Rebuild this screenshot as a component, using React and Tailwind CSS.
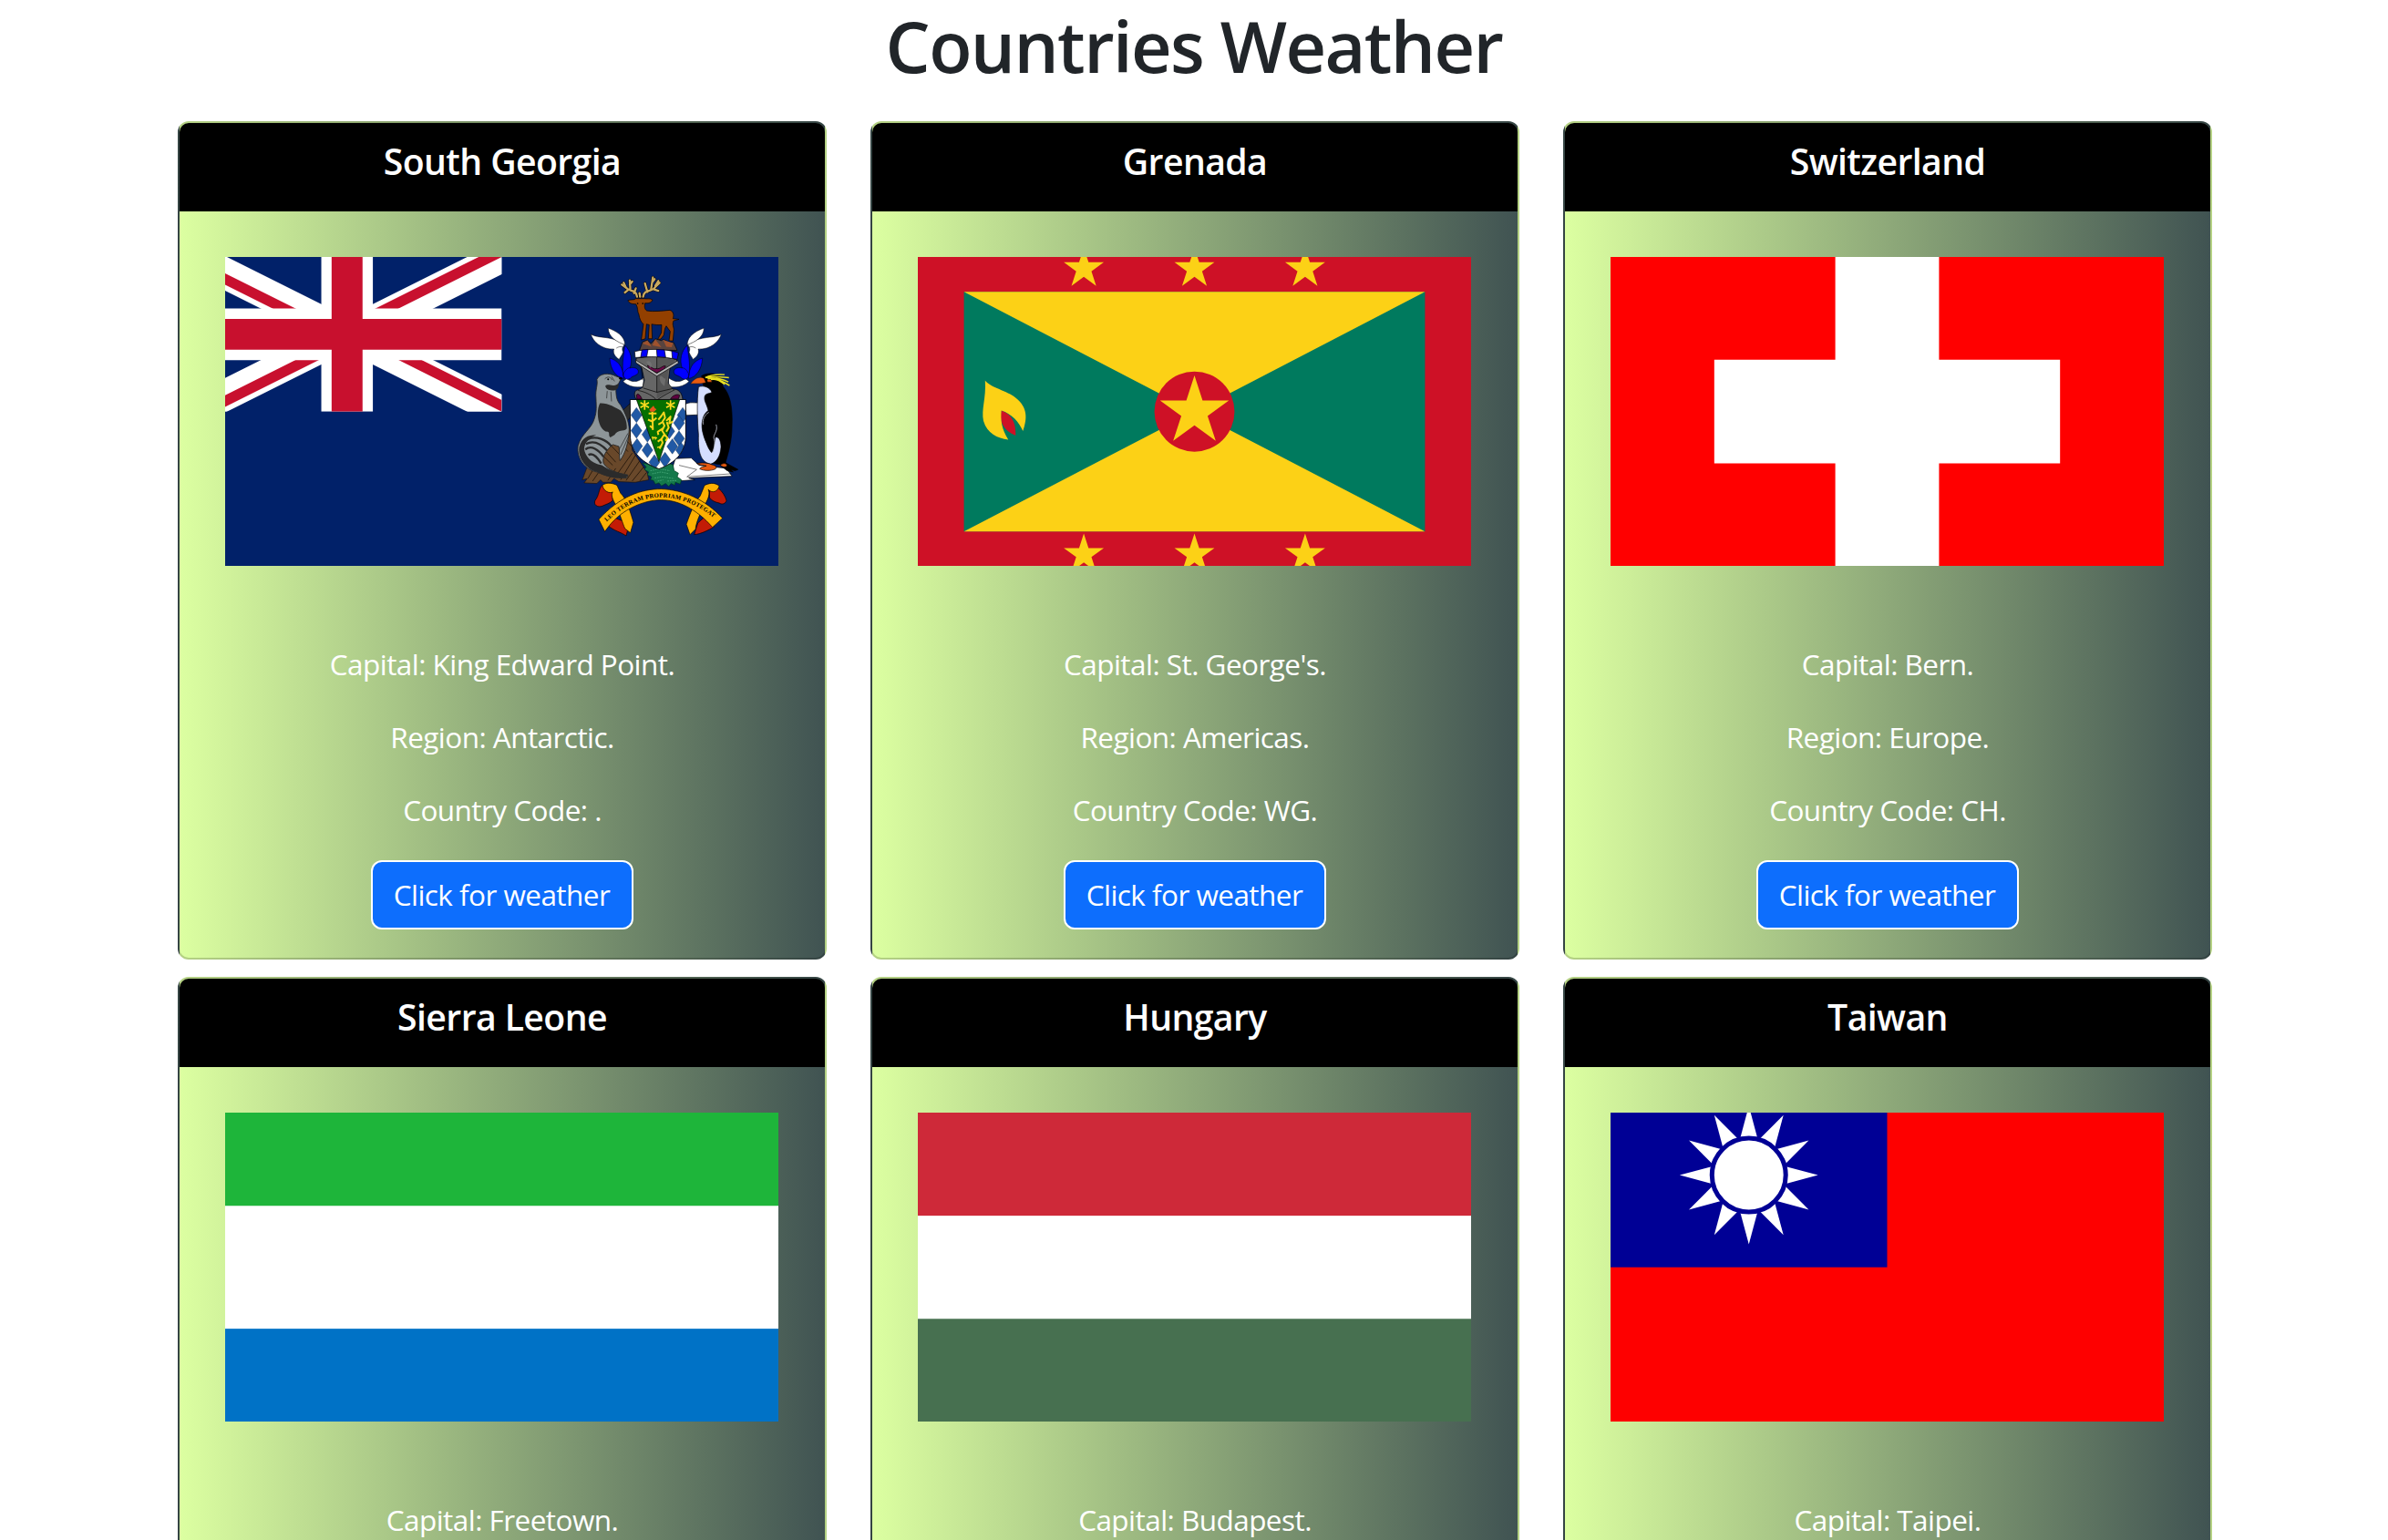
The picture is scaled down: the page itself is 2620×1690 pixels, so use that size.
const STAR =
  "0,-1 0.2245,-0.309 0.951,-0.309 0.3633,0.118 0.5878,0.809 0,0.382 -0.5878,0.809 -0.3633,0.118 -0.951,-0.309 -0.2245,-0.309";

function Flag({ viewBox, children }) {
  return (
    <svg
      className="block h-[339.4px] w-full"
      viewBox={viewBox}
      preserveAspectRatio="xMidYMid slice"
    >
      {children}
    </svg>
  );
}

function Feathers() {
  return (
    <g stroke="#000" strokeWidth="1.5">
      <path fill="#fff" d="M232 405C248 418 268 418 288 402L286 432C262 435 238 432 220 414Z" />
      <path fill="#fff" d="M114 259C140 275 178 262 224 291C222 303 214 302 220 318C216 330 209 336 207 342C192 332 186 320 190 308C150 310 122 284 114 259Z" />
      <path fill="#fff" d="M171 239C196 248 226 264 226 294C200 284 172 270 171 239Z" />
      <path fill="#00f" d="M176 338C200 344 220 362 222 405C196 400 178 374 176 338Z" />
      <path fill="#00f" d="M226 296C246 314 252 344 243 370C260 366 272 374 270 384C268 396 252 394 244 404C230 412 222 404 220 390C216 350 222 330 226 296Z" />
      <path fill="none" d="M220 395C225 375 238 368 244 370M198 305C208 298 216 300 222 303" />
    </g>
  );
}

const ANTLERS =
  "M266 136C262 108 240 122 230 106L222 90M236 114L226 122M244 114L242 82M256 124L262 108M232 108L216 96M242 96L250 86M286 136C290 108 316 122 326 104L340 90M312 112L318 72M300 120L292 92M326 100L336 84M322 112L336 116M316 88L324 78M276 136L274 124";

function Stag() {
  return (
    <g>
      <path d={ANTLERS} fill="none" stroke="#000" strokeWidth="10" strokeLinecap="round" />
      <path d={ANTLERS} fill="none" stroke="#c9a960" strokeWidth="7" strokeLinecap="round" />
      <path
        fill="#934000"
        stroke="#000"
        strokeWidth="2"
        d="M236 148C246 144 256 148 262 142H290C298 144 308 140 317 146C314 156 302 158 292 157C290 168 290 176 298 182C320 186 350 182 374 180C386 184 388 196 384 208L404 210L386 215C380 228 388 236 387 248L384 281H371L375 250L362 232C356 240 356 252 354 262L344 275L334 276L346 254L347 228C330 230 318 226 314 226L316 274H303L306 228L297 226L293 274L280 278L287 226C278 218 274 208 272 194C266 184 270 170 262 160C250 160 240 158 236 148Z"
      />
      <circle cx="268" cy="158" r="2.5" />
      <circle cx="285" cy="158" r="2.5" />
    </g>
  );
}

function Seal() {
  return (
    <g>
      <path
        fill="#69482a"
        stroke="#20140a"
        strokeWidth="2"
        d="M236 560L190 610L104 690L86 738L102 734L92 748L134 750L146 738L154 746L180 746L190 734L206 744L260 746L304 738L300 716L250 640L244 580Z"
      />
      <path
        fill="none"
        stroke="#20140a"
        strokeWidth="2.5"
        d="M120 742L142 710M170 740L196 700M160 640L196 680M150 655L186 690M180 625L214 660M200 605L236 645M216 590L248 628M212 738L262 655M230 740L275 675M250 742L288 695M275 742L296 715M200 720L250 650M104 734L130 690"
      />
      <path fill="#2e2e2e" stroke="#000" strokeWidth="1.5" d="M214 514L244 486L246 530L232 546Z" />
      <path
        fill="#8d9598"
        stroke="#222"
        strokeWidth="2.5"
        d="M134 408C142 388 172 384 196 397L214 404L206 420L196 436C198 460 196 474 212 492C228 520 240 548 240 572C238 616 228 650 210 675C206 660 210 640 206 628L186 622C164 640 150 664 156 684C170 706 200 716 236 722L232 732C196 734 160 724 134 712C96 706 66 668 72 626C84 584 116 572 126 536C134 512 132 496 131 470C128 440 138 428 134 408Z"
      />
      <path
        fill="#2b2b2b"
        d="M144 486C168 484 196 500 212 510C228 530 234 552 232 570C220 582 204 570 192 590L178 598C170 592 178 584 170 580C140 580 128 516 144 486ZM162 428C172 420 188 436 206 420C206 438 198 444 188 444C176 444 162 440 162 428ZM76 630C84 600 104 590 132 590C112 600 94 612 92 636C96 662 116 684 150 690C176 708 206 716 236 722L230 732C180 734 150 722 136 712C100 706 70 668 76 630Z"
      />
      <path
        fill="none"
        stroke="#2b2b2b"
        strokeWidth="7"
        d="M104 604C132 592 166 606 182 628M98 620C124 606 150 622 168 642M96 638C116 622 140 640 156 662M106 656C120 648 136 664 148 684"
      />
      <path fill="none" stroke="#222" strokeWidth="2" d="M160 406C170 396 180 400 184 410M182 398L192 414M168 446L166 470M180 448L182 480M206 640L236 585M212 655L240 590" />
      <circle cx="171" cy="407" r="3" />
      <ellipse cx="212" cy="404" rx="5" ry="4" />
    </g>
  );
}

function Penguin() {
  return (
    <g stroke="#000" strokeWidth="2">
      <path fill="#fff" d="M392 668L444 666L470 690L560 700L578 726L436 732L456 738L396 742L382 700Z" />
      <path fill="none" strokeWidth="1.5" d="M404 690L462 704L430 728L576 718" />
      <path fill="#fff" d="M424 490C440 480 454 486 468 484V524L428 526Z" />
      <path d="M548 676L572 690L598 704L588 708L574 704L582 712L562 708L540 690Z" />
      <path d="M478 396C496 384 530 386 544 404L548 430C574 460 580 500 578 560C578 610 566 650 556 684C540 692 500 684 480 660L466 540L484 430Z" />
      <path fill="#d5deff" d="M468 432C484 426 506 434 512 450C502 456 490 452 488 466C486 480 496 490 500 510C480 524 474 556 484 590C494 626 512 640 520 600C534 590 542 610 542 630C540 660 528 680 508 686C476 680 466 650 468 590C464 540 462 480 468 432Z" />
      <path d="M484 540C484 520 508 506 518 520C530 540 526 580 522 606C518 640 514 655 508 645C490 620 482 580 484 540Z" />
      <path fill="none" stroke="#e9edff" d="M502 516C486 524 480 544 484 556M526 556C534 580 512 590 520 606C524 620 518 640 512 652" />
      <path fill="#e85a10" strokeWidth="1" d="M442 422C456 402 472 398 486 404L492 418C474 424 460 420 442 422ZM496 410C504 404 510 408 512 416L498 416Z" />
      <path
        fill="none"
        stroke="#e8e020"
        strokeWidth="4.5"
        d="M490 402C512 390 532 390 554 392M492 402C520 396 540 400 568 402M498 406C524 400 544 406 566 416M508 408C530 404 548 414 570 428M520 408C536 408 546 418 554 424"
      />
      <path fill="#e85a10" d="M462 684C480 680 500 682 512 688C524 690 530 696 524 702C508 710 484 708 472 702C474 696 486 694 494 692C484 690 470 690 462 684ZM540 690C550 680 562 684 562 692C556 698 546 696 540 690Z" />
    </g>
  );
}

function Helmet() {
  return (
    <g stroke="#000" strokeWidth="2">
      <path fill="#59433e" d="M274 312L284 284L300 278L312 290L326 274L346 280L352 276L372 286H386L398 312Z" />
      <path fill="#a0522d" stroke="none" d="M284 290L300 280L314 300ZM316 296L326 276L346 302ZM352 278L384 288L380 302L362 300Z" />
      <path fill="#666" d="M264 338C310 330 350 332 394 342L400 350L374 372L368 420L384 440C400 438 414 450 416 474C390 480 350 474 334 480C310 474 280 478 262 472C254 456 258 442 270 442L284 434L290 410L282 372L262 348Z" />
      <path fill="#555" stroke="none" d="M331 334L392 344L370 368L364 416L382 440L331 470Z" />
      <path fill="none" d="M331 310V450L286 436M331 450L382 438M280 366L284 410M270 444C300 450 320 464 331 476C350 462 376 448 390 442" />
      <path fill="#6b0b49" d="M300 362C310 362 316 376 330 372C342 376 350 360 360 364L354 374L331 386L306 374Z" />
      <path fill="#b5b5b5" d="M262 344L331 388L400 346L402 354L331 397L262 353Z" />
      <path fill="#5e0040" d="M264 460C266 452 276 456 282 472L266 473ZM376 472C382 460 400 454 406 460L402 472Z" />
      <path fill="#777" stroke="none" opacity=".7" d="M340 400C350 390 352 410 360 404L356 430C346 420 342 420 340 400ZM296 350C310 340 320 360 310 370Z" />
      <path fill="#fff" d="M258 316C300 306 360 306 402 320L398 342C350 332 310 332 260 336Z" />
      <path fill="#00f" d="M282 311L302 309L298 333L278 334ZM330 309L356 311L360 335L332 333ZM380 314L402 320L398 342L382 338Z" />
    </g>
  );
}

const CELLS = [
  [264, 525], [264, 576], [266, 627], [300, 589], [300, 640], [323, 680],
  [416, 525], [404, 551], [404, 602], [411, 640], [382, 628], [358, 672], [372, 578],
];

function Shield() {
  return (
    <g>
      <path
        fill="#14784a"
        stroke="#003a20"
        strokeWidth="2"
        d="M284 682L300 686L330 700L370 684L384 688L388 708L402 716L398 728L412 738L408 752L392 746L390 756L378 750L370 760L360 750L346 758L338 748L326 752L320 740L310 738L314 728L300 722L304 712L290 704L296 696Z"
      />
      <path
        fill="none"
        stroke="#57b98a"
        strokeWidth="2"
        strokeDasharray="5 3"
        d="M310 708L340 702L374 708M316 718L345 712L372 718M324 732L350 728L388 734M334 742L352 738M366 742L396 740"
      />
      <clipPath id="shield">
        <path d="M243 474H426V600C422 650 392 682 338 702C284 682 248 650 244 600Z" />
      </clipPath>
      <g clipPath="url(#shield)">
        <rect x="240" y="470" width="190" height="240" fill="#fff" />
        <g fill="#2159a5" stroke="#10203a" strokeWidth="1">
          {CELLS.map(([x, y]) => (
            <path key={`${x}-${y}`} d={`M${x} ${y - 25}l18 25l-18 25l-18-25Z`} />
          ))}
        </g>
        <path fill="#067000" stroke="#000" strokeWidth="2" d="M264 474H406L338 678Z" />
      </g>
      <path
        fill="none"
        stroke="#000"
        strokeWidth="2.5"
        d="M243 474H426V600C422 650 392 682 338 702C284 682 248 650 244 600Z"
      />
      <path
        fill="none"
        stroke="#ffdc1f"
        strokeWidth="5"
        d="M291 476V508M277 484L305 500M277 500L305 484M376 476V508M362 484L390 500M362 500L390 484"
      />
      <g fill="none" stroke="#f7d51d" strokeWidth="6" strokeLinejoin="round">
        <path d="M316 514L318 574M304 520H330M302 540L316 546L330 534M308 560L318 568" />
        <path d="M336 540L346 528L354 516L358 534L350 546L356 560L348 576L356 588L346 604L350 616L340 636M350 548L336 556M352 568L334 580L336 590M356 588L366 600L360 610M346 604L334 612M362 544L376 530L372 552L384 546M364 548L370 566L362 580" />
        <path strokeWidth="4" d="M314 598L332 600M318 596V606M326 596V606M332 632L344 628" />
      </g>
      <path fill="#e4571b" d="M306 508L312 502L320 494L324 502L330 506L322 514H310Z" />
    </g>
  );
}

function Ribbon() {
  return (
    <g stroke="#000" strokeWidth="2">
      <path fill="#c31b06" d="M152 756C140 764 142 790 128 806C122 820 136 830 152 824C164 818 176 816 186 806L184 780Z" />
      <path fill="#c31b06" d="M504 760C516 766 524 760 534 766C548 778 556 792 560 806C556 818 544 820 536 814C524 812 510 806 504 796Z" />
      <path fill="#c31b06" d="M190 862L226 876L236 900L230 922C214 910 190 906 170 888Z" />
      <path fill="#c31b06" d="M490 858L466 880L454 918C476 916 500 904 520 892Z" />
      <path fill="#ffb000" d="M152 756C166 744 190 750 200 756L212 782C232 800 246 850 254 878L244 912L226 898C218 880 210 850 196 820C184 800 180 786 186 778C176 784 156 776 152 756Z" />
      <path fill="#ffb000" d="M536 758C520 744 500 750 488 756L474 790C452 816 440 850 428 884L440 918L458 900C462 870 474 850 488 820C502 800 506 780 500 770C514 784 532 776 536 758Z" />
      <path fill="#ffb000" d="M140 868C210 792 280 768 345 768C416 770 490 802 547 864L514 894C460 832 400 804 345 804C290 804 216 834 172 892L160 908Z" />
      <path id="motto" fill="none" stroke="none" d="M166 876C230 814 290 796 345 795C406 796 470 820 528 872" />
      <text className="font-['Liberation_Serif'] text-[20px] font-bold" fill="#000" stroke="none">
        <textPath href="#motto" textLength="390" lengthAdjust="spacing">
          LEO TERRAM PROPRIAM PROTEGAT
        </textPath>
      </text>
    </g>
  );
}

function SouthGeorgiaFlag() {
  return (
    <Flag viewBox="0 0 1200 600">
      <clipPath id="canton">
        <path d="M0 0H600V300H0Z" />
      </clipPath>
      <clipPath id="saltire">
        <path d="M300 150H600V300ZM300 150V300H0ZM300 150H0V0ZM300 150V0H600Z" />
      </clipPath>
      <rect width="1200" height="600" fill="#012169" />
      <g clipPath="url(#canton)">
        <path d="M0 0L600 300M600 0L0 300" stroke="#fff" strokeWidth="60" />
        <path d="M0 0L600 300M600 0L0 300" stroke="#c8102e" strokeWidth="40" clipPath="url(#saltire)" />
        <path d="M300 0V300M0 150H600" stroke="#fff" strokeWidth="100" />
        <path d="M300 0V300M0 150H600" stroke="#c8102e" strokeWidth="60" />
      </g>
      <g transform="translate(705.5 -3) scale(.59)">
        <Feathers />
        <g transform="translate(657 0) scale(-1 1)">
          <Feathers />
        </g>
        <Seal />
        <Penguin />
        <Helmet />
        <Stag />
        <Shield />
        <Ribbon />
      </g>
    </Flag>
  );
}

function GrenadaFlag() {
  return (
    <Flag viewBox="0 0 500 300">
      <rect width="500" height="300" fill="#ce1126" />
      <rect x="41.67" y="41.67" width="416.66" height="216.66" fill="#007a5e" />
      <path fill="#fcd116" d="M41.67 41.67H458.33L41.67 258.33H458.33Z" />
      <circle cx="250" cy="150" r="36.2" fill="#ce1126" />
      <polygon points={STAR} fill="#fcd116" transform="translate(250 150) scale(32.7)" />
      {[150, 250, 350].map((x) => (
        <g key={x} fill="#fcd116">
          <polygon points={STAR} transform={`translate(${x} 20.9) scale(19)`} />
          <polygon points={STAR} transform={`translate(${x} 279.2) scale(19)`} />
        </g>
      ))}
      <g transform="translate(-38.4 -7.4) scale(.3674 .2743)">
        <path fill="#ce1126" d="M310 570C330 580 346 600 345 653C316 635 304 610 310 570Z" />
        <path
          fill="#fcd116"
          d="M270 471C283 495 325 505 345 528C375 560 374 595 363 638C355 610 335 580 310 570C308 600 310 630 327 666C300 663 275 645 266 605C260 565 273 530 270 471Z"
        />
      </g>
    </Flag>
  );
}

function SwitzerlandFlag() {
  return (
    <Flag viewBox="0 0 32 32">
      <rect width="32" height="32" fill="#f00" />
      <path fill="#fff" d="M13 6H19V13H26V19H19V26H13V19H6V13H13Z" />
    </Flag>
  );
}

function SierraLeoneFlag() {
  return (
    <Flag viewBox="0 0 9 6">
      <rect width="9" height="6" fill="#fff" />
      <rect width="9" height="2" fill="#1eb53a" />
      <rect width="9" height="2" y="4" fill="#0072c6" />
    </Flag>
  );
}

function HungaryFlag() {
  return (
    <Flag viewBox="0 0 6 3">
      <rect width="6" height="3" fill="#fff" />
      <rect width="6" height="1" fill="#ce2939" />
      <rect width="6" height="1" y="2" fill="#477050" />
    </Flag>
  );
}

function TaiwanFlag() {
  return (
    <Flag viewBox="0 0 900 600">
      <rect width="900" height="600" fill="#fe0000" />
      <rect width="450" height="300" fill="#000095" />
      <g transform="translate(225 150)">
        {Array.from({ length: 12 }, (_, i) => (
          <path key={i} fill="#fff" d="M0 -112.5L15 -56.5H-15Z" transform={`rotate(${i * 30})`} />
        ))}
        <circle r="60" fill="#fff" stroke="#000095" strokeWidth="7.5" />
      </g>
    </Flag>
  );
}

const countries = [
  { name: "South Georgia", capital: "King Edward Point", region: "Antarctic", code: "", Art: SouthGeorgiaFlag },
  { name: "Grenada", capital: "St. George's", region: "Americas", code: "WG", Art: GrenadaFlag },
  { name: "Switzerland", capital: "Bern", region: "Europe", code: "CH", Art: SwitzerlandFlag },
  { name: "Sierra Leone", capital: "Freetown", Art: SierraLeoneFlag },
  { name: "Hungary", capital: "Budapest", Art: HungaryFlag },
  { name: "Taiwan", capital: "Taipei", Art: TaiwanFlag },
];

function CountryCard({ name, capital, region, code, Art }) {
  return (
    <article className="flex h-[919.8px] flex-col rounded-xl border-2 border-black/[.175] bg-[linear-gradient(to_right,#dcffa1,#405352)] text-center text-white">
      <h2 className="h-[96.6px] shrink-0 rounded-t-[10px] bg-black pt-[14.2px] text-[39.2px] leading-[54px] font-semibold tracking-[-0.6px]">
        {name}
      </h2>
      <div className="pt-[50px] pr-[51px] pl-[50px]">
        <Art />
      </div>
      <div className="mt-[83.2px] flex flex-col items-center gap-8 text-[31.5px] leading-[48px] tracking-[-0.55px]">
        <p>Capital: {capital}.</p>
        {region && (
          <>
            <p>Region: {region}.</p>
            <p>Country Code: {code}.</p>
            <button className="-mt-px mr-px h-[76px] w-[288px] rounded-xl border-2 border-white bg-[#0d6efd]">
              Click for weather
            </button>
          </>
        )}
      </div>
    </article>
  );
}

export default function App() {
  return (
    <div className="h-[1690px] w-full overflow-hidden bg-white font-['Open_Sans',sans-serif]">
      <h1 className="h-[133.4px] pt-px text-center text-[77.5px] leading-[98px] font-semibold tracking-[-1.6px] text-[#212529]">
        Countries Weather
      </h1>
      <main className="mx-auto grid w-[2232px] translate-x-px grid-cols-3 gap-x-12 gap-y-[19.2px]">
        {countries.map((country) => (
          <CountryCard key={country.name} {...country} />
        ))}
      </main>
    </div>
  );
}
